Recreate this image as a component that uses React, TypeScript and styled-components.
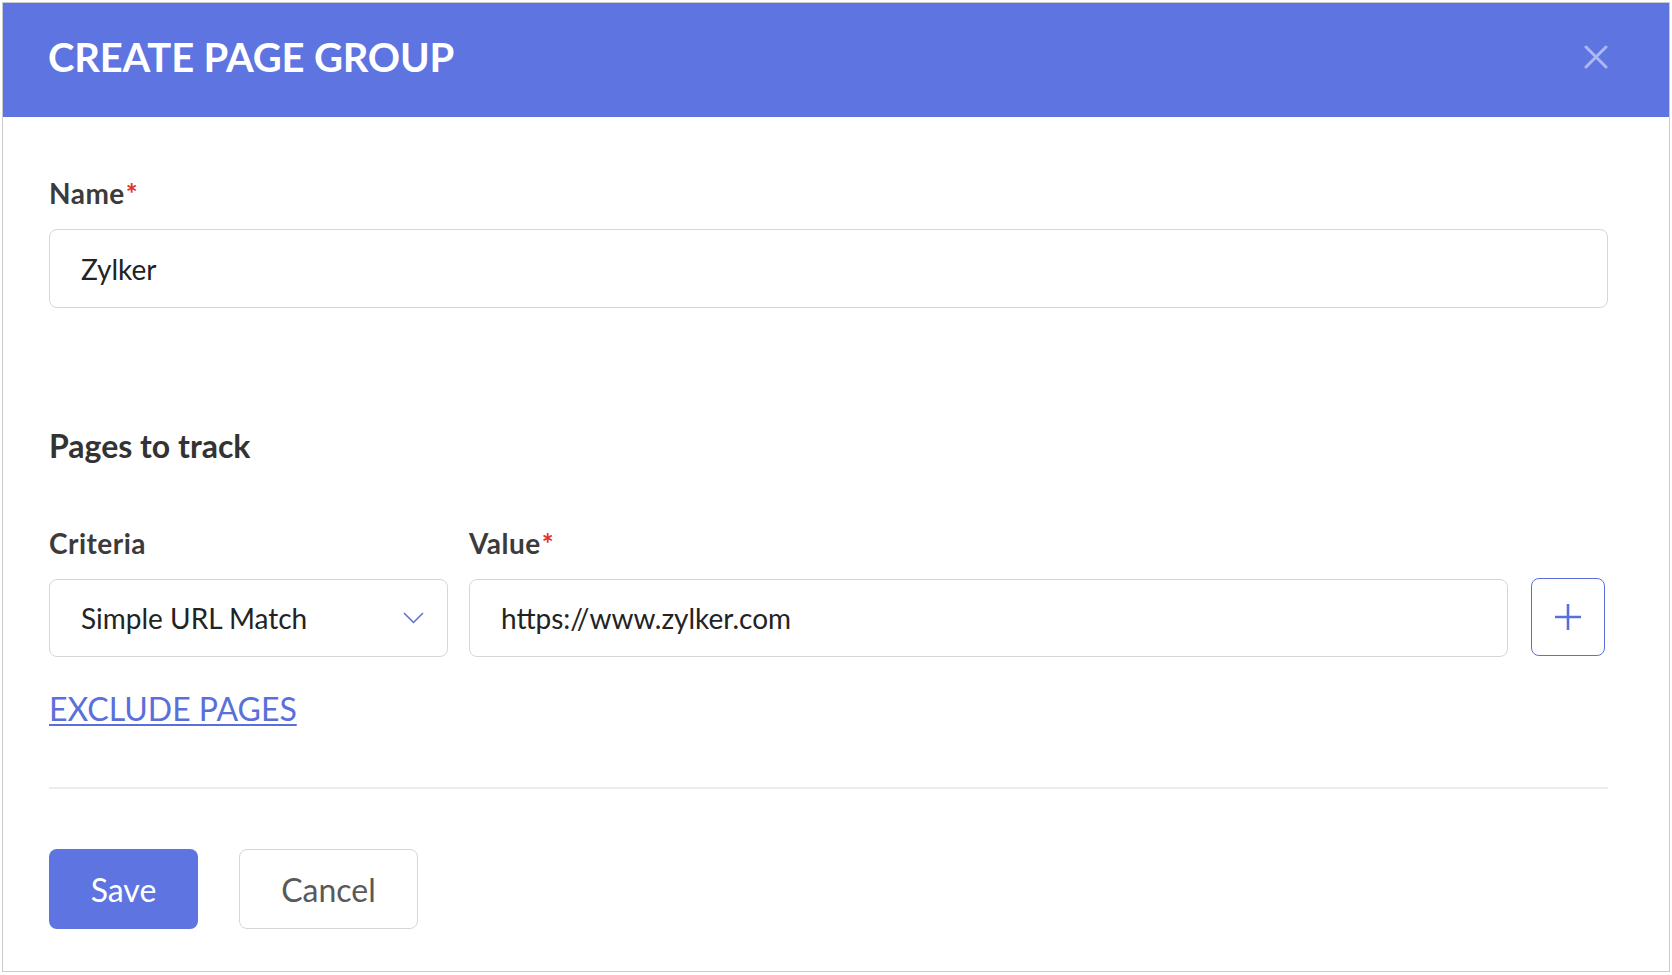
import styled, { createGlobalStyle } from "styled-components";

const GlobalStyle = createGlobalStyle`
  html, body {
    margin: 0;
    padding: 0;
    background: #ffffff;
    font-family: Lato, "Noto Sans", "Liberation Sans", sans-serif;
  }
  * {
    box-sizing: border-box;
  }
`;

const Page = styled.div`
  padding: 2px;
  width: 1672px;
`;

const Dialog = styled.div`
  width: 1668px;
  border: 1px solid #c9cacd;
  background: #ffffff;
  display: flex;
  flex-direction: column;
`;

const Header = styled.header`
  height: 114px;
  background: #5e74e0;
  display: flex;
  align-items: center;
  justify-content: space-between;
  padding: 0 61px 6px 45px;
`;

const Title = styled.h1`
  margin: 0;
  color: #ffffff;
  font-size: 40px;
  font-weight: 700;
  line-height: 50px;
  letter-spacing: -0.2px;
`;

const CloseButton = styled.button`
  background: none;
  border: none;
  padding: 0;
  width: 24px;
  height: 24px;
  display: flex;
  cursor: pointer;
`;

const Body = styled.div`
  padding: 60px 61px 42px 46px;
  display: flex;
  flex-direction: column;
`;

const Label = styled.label`
  display: block;
  font-size: 28px;
  font-weight: 700;
  line-height: 32px;
  letter-spacing: 0.5px;
  color: #3b3b3b;
  margin-bottom: 20px;
`;

const Required = styled.span`
  color: #e0342c;
  margin-left: 1px;
`;

const TextBox = styled.div<{ $height?: number }>`
  height: ${(p) => p.$height ?? 78}px;
  border: 1px solid #d6d6d6;
  border-radius: 8px;
  display: flex;
  align-items: center;
  padding: 0 23px 0 31px;
  font-size: 28px;
  color: #232323;
  background: #ffffff;
`;

const SectionTitle = styled.h2`
  margin: 118px 0 61px;
  font-size: 32px;
  font-weight: 700;
  line-height: 40px;
  color: #333333;
`;

const CriteriaGrid = styled.div`
  display: grid;
  grid-template-columns: 399px 1fr 76px;
  column-gap: 21px;
  padding-right: 3px;
  align-items: end;
`;

const Field = styled.div`
  display: flex;
  flex-direction: column;
`;

const SelectValue = styled.span`
  flex: 1;
`;

const AddButton = styled.button`
  justify-self: end;
  height: 78px;
  width: 74px;
  border: 1.5px solid #5b6fdb;
  border-radius: 8px;
  background: #ffffff;
  display: flex;
  align-items: center;
  justify-content: center;
  padding: 0;
  cursor: pointer;
  position: relative;
  top: -1px;
`;

const ExcludeLink = styled.a`
  margin-top: 33px;
  align-self: flex-start;
  font-size: 32px;
  line-height: 38px;
  color: #5b6fdb;
  text-decoration: underline;
  text-decoration-thickness: 2px;
  text-underline-offset: 3px;
  cursor: pointer;
`;

const Divider = styled.hr`
  margin: 59px 0 0;
  border: none;
  height: 2px;
  background: #ececec;
`;

const Actions = styled.div`
  margin-top: 60px;
  display: flex;
  gap: 41px;
`;

const Button = styled.button<{ $primary?: boolean }>`
  height: 80px;
  width: ${(p) => (p.$primary ? 149 : 179)}px;
  border-radius: 8px;
  font-family: inherit;
  font-size: 32px;
  cursor: pointer;
  background: ${(p) => (p.$primary ? "#5e74e0" : "#ffffff")};
  color: ${(p) => (p.$primary ? "#ffffff" : "#595959")};
  border: ${(p) => (p.$primary ? "none" : "1.5px solid #d6d6d6")};
`;

function CloseIcon() {
  return (
    <svg width="24" height="24" viewBox="0 0 24 24" fill="none">
      <path
        d="M2 2L22 22M22 2L2 22"
        stroke="#acb7f4"
        strokeWidth="3"
        strokeLinecap="round"
      />
    </svg>
  );
}

function ChevronDown() {
  return (
    <svg width="21" height="12" viewBox="0 0 21 12" fill="none">
      <path d="M1 1L10.5 10.5L20 1" stroke="#5b6fdb" strokeWidth="1.5" />
    </svg>
  );
}

function PlusIcon() {
  return (
    <svg width="26" height="26" viewBox="0 0 26 26" fill="none">
      <path d="M13 0V26M0 13H26" stroke="#5b6fdb" strokeWidth="2.6" />
    </svg>
  );
}

export default function App() {
  return (
    <Page>
      <GlobalStyle />
      <Dialog>
        <Header>
          <Title>CREATE PAGE GROUP</Title>
          <CloseButton aria-label="Close">
            <CloseIcon />
          </CloseButton>
        </Header>
        <Body>
          <Label>
            Name<Required>*</Required>
          </Label>
          <TextBox $height={79}>Zylker</TextBox>

          <SectionTitle>Pages to track</SectionTitle>

          <CriteriaGrid>
            <Field>
              <Label>Criteria</Label>
              <TextBox>
                <SelectValue>Simple URL Match</SelectValue>
                <ChevronDown />
              </TextBox>
            </Field>
            <Field>
              <Label>
                Value<Required>*</Required>
              </Label>
              <TextBox>https://www.zylker.com</TextBox>
            </Field>
            <AddButton aria-label="Add">
              <PlusIcon />
            </AddButton>
          </CriteriaGrid>

          <ExcludeLink>EXCLUDE PAGES</ExcludeLink>

          <Divider />

          <Actions>
            <Button $primary>Save</Button>
            <Button>Cancel</Button>
          </Actions>
        </Body>
      </Dialog>
    </Page>
  );
}
